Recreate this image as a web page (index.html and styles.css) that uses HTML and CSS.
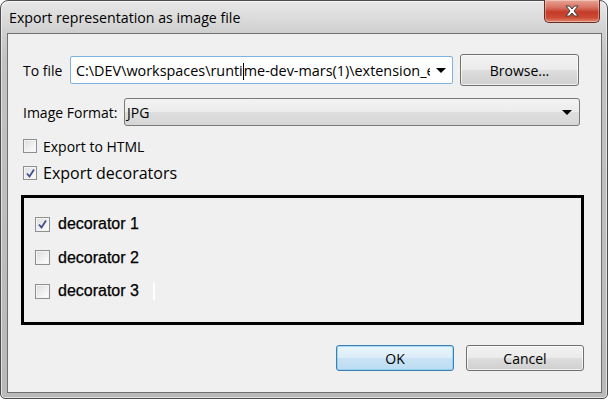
FILE: index.html
```html
<!DOCTYPE html>
<html>
<head>
<meta charset="utf-8">
<link rel="stylesheet" href="styles.css">
</head>
<body>
<div class="window">
  <div class="titlebar">
    <span class="title">Export representation as image file</span>
    <span class="close">
      <svg width="22" height="14" viewBox="0 0 22 14"><path d="M5 2 L8.5 2 L11 5 L13.5 2 L17 2 L13 7 L17 12 L13.5 12 L11 9 L8.5 12 L5 12 L9 7 Z" fill="#fff" stroke="#3b3b3b" stroke-width="1" stroke-linejoin="round"/></svg>
    </span>
  </div>
  <div class="client">
    <div class="row row-file">
      <span class="label label-file">To file</span>
      <div class="combo combo-edit">
        <span class="combo-text">C:\DEV\workspaces\runti<span class="caret"></span>me-dev-mars(1)\extension_e</span>
        <span class="arrow"></span>
      </div>
      <button class="btn btn-browse">Browse...</button>
    </div>
    <div class="row row-format">
      <span class="label label-format">Image Format:</span>
      <div class="combo combo-ro">
        <span class="combo-text">JPG</span>
        <span class="arrow"></span>
      </div>
    </div>
    <div class="check check-html">
      <span class="box"></span>
      <span class="check-label">Export to HTML</span>
    </div>
    <div class="check check-deco">
      <span class="box checked"><svg width="11" height="11" viewBox="0 0 11 11"><path d="M2 5.5 L4.5 8.5 L9 1.5" fill="none" stroke="#3d4f8c" stroke-width="1.8"/></svg></span>
      <span class="check-label big">Export decorators</span>
    </div>
    <div class="group">
      <div class="dcheck">
        <span class="box dbox checked"><svg width="11" height="11" viewBox="0 0 11 11"><path d="M2 5.5 L4.5 8.5 L9 1.5" fill="none" stroke="#3d4f8c" stroke-width="1.8"/></svg></span>
        <span class="dlabel">decorator 1</span>
      </div>
      <div class="dcheck">
        <span class="box dbox"></span>
        <span class="dlabel">decorator 2</span>
      </div>
      <div class="dcheck">
        <span class="box dbox"></span>
        <span class="dlabel">decorator 3</span>
        <span class="whitebar"></span>
      </div>
    </div>
    <div class="buttons">
      <button class="btn btn-ok">OK</button>
      <button class="btn btn-cancel">Cancel</button>
    </div>
  </div>
</div>
</body>
</html>
```

FILE: styles.css
```css
html, body {
  margin: 0;
  padding: 0;
  background: #ffffff;
}

.window {
  box-sizing: border-box;
  width: 608px;
  height: 399px;
  border: 1px solid #4e4e4e;
  border-radius: 8px 8px 5px 5px;
  background: linear-gradient(180deg, #e8e8e8 0px, #d9d9d9 20px, #cfcfcf 32px, #c2c2c2 60px, #b9b9b9 100%);
  box-shadow: inset 0 0 0 1px rgba(255,255,255,0.55);
  padding: 0 5px 5px 6px;
  display: flex;
  flex-direction: column;
  font-family: "Open Sans", "Noto Sans", sans-serif;
  color: #000;
}

.titlebar {
  height: 32px;
  display: flex;
  justify-content: space-between;
  align-items: flex-start;
}

.title {
  font-size: 14.2px;
  margin-left: 2px;
  margin-top: 7px;
  color: #000;
}

.close {
  width: 56px;
  height: 23px;
  margin-top: -1px;
  margin-right: 2px;
  box-sizing: border-box;
  border: 1px solid #6b2a22;
  border-top: none;
  border-radius: 0 0 5px 5px;
  background: linear-gradient(180deg, #e7a597 0%, #d7705f 35%, #c33b28 55%, #cc4a34 80%, #e08a70 100%);
  display: flex;
  align-items: center;
  justify-content: center;
  box-shadow: inset 0 0 0 1px rgba(255,255,255,0.35);
}

.client {
  box-sizing: border-box;
  height: 360px;
  border: 1px solid #6f6f6f;
  background: #f0f0f0;
  padding: 20px 17px 0 13px;
  display: flex;
  flex-direction: column;
}

.row {
  display: flex;
  align-items: center;
  margin-right: 4px;
}

.row-file {
  height: 32px;
}

.row-format {
  height: 28px;
  margin-top: 12px;
}

.label {
  font-size: 14px;
  margin-left: 2px;
  flex: none;
}

.label-file { width: 47px; }
.label-format { width: 101px; }

.combo {
  box-sizing: border-box;
  height: 28px;
  display: flex;
  align-items: center;
  font-size: 14px;
}

.combo-edit {
  width: 383px;
  background: #fff;
  border: 1px solid #7fb2e0;
  border-radius: 2px;
  padding-left: 5px;
}

.combo-edit .combo-text {
  font-size: 14.4px;
  width: 354px;
  overflow: hidden;
  flex: none;
}

.combo-ro {
  flex: 1;
  border: 1px solid #7a7a7a;
  border-radius: 3px;
  background: linear-gradient(180deg, #f3f3f3 0%, #ececec 48%, #dedede 52%, #d6d6d6 100%);
  padding-left: 2px;
}

.combo-text {
  white-space: nowrap;
}

.caret {
  display: inline-block;
  width: 1px;
  height: 17px;
  background: #000;
  vertical-align: -4px;
}

.arrow {
  width: 0;
  height: 0;
  border-left: 5px solid transparent;
  border-right: 5px solid transparent;
  border-top: 5px solid #000;
  margin-left: auto;
  margin-right: 6px;
}

.combo-ro .arrow {
  margin-right: 7px;
}

.btn {
  box-sizing: border-box;
  font-family: "Open Sans", "Noto Sans", sans-serif;
  font-size: 14px;
  color: #000;
  border: 1px solid #707070;
  border-radius: 3px;
  background: linear-gradient(180deg, #f2f2f2 0%, #ebebeb 48%, #dddddd 52%, #cfcfcf 100%);
  box-shadow: inset 0 0 0 1px rgba(255,255,255,0.7);
  padding: 0;
}

.btn-browse {
  width: 119px;
  height: 32px;
  margin-left: 7px;
}

.check {
  display: flex;
  align-items: center;
  height: 20px;
  margin-left: 2px;
}

.check-html { margin-top: 10px; }
.check-deco { margin-top: 7px; }

.box {
  box-sizing: border-box;
  width: 14px;
  height: 14px;
  border: 1px solid #8e8f8f;
  background: linear-gradient(135deg, #dcdcdc 0%, #f2f2f2 60%, #ffffff 100%);
  box-shadow: inset 0 0 0 1px #f4f4f4;
  display: flex;
  align-items: center;
  justify-content: center;
  flex: none;
}

.check-label {
  font-size: 14px;
  margin-left: 6px;
}

.check-label.big {
  font-size: 16px;
}

.group {
  box-sizing: border-box;
  height: 130px;
  margin-top: 12px;
  border: 3px solid #000;
  padding: 16px 0 0 11px;
  display: flex;
  flex-direction: column;
  gap: 13.5px;
}

.dcheck {
  display: flex;
  align-items: center;
  height: 20px;
}

.dbox {
  width: 15px;
  height: 15px;
}

.dlabel {
  font-family: "Liberation Sans", Arial, sans-serif;
  font-size: 16px;
  margin-left: 8px;
  -webkit-text-stroke: 0.25px #000;
}

.whitebar {
  width: 2px;
  height: 17px;
  background: #ffffff;
  margin-left: 14px;
}

.buttons {
  display: flex;
  justify-content: flex-end;
  gap: 12px;
  margin-top: 20px;
}

.btn-ok, .btn-cancel {
  width: 118px;
  height: 26px;
}

.btn-ok {
  border-color: #3c7fb1;
  background: linear-gradient(180deg, #eaf5fc 0%, #dcedf9 48%, #c9e3f5 52%, #bcdcf1 100%);
  box-shadow: inset 0 0 0 1px rgba(120,200,240,0.6);
}
```
